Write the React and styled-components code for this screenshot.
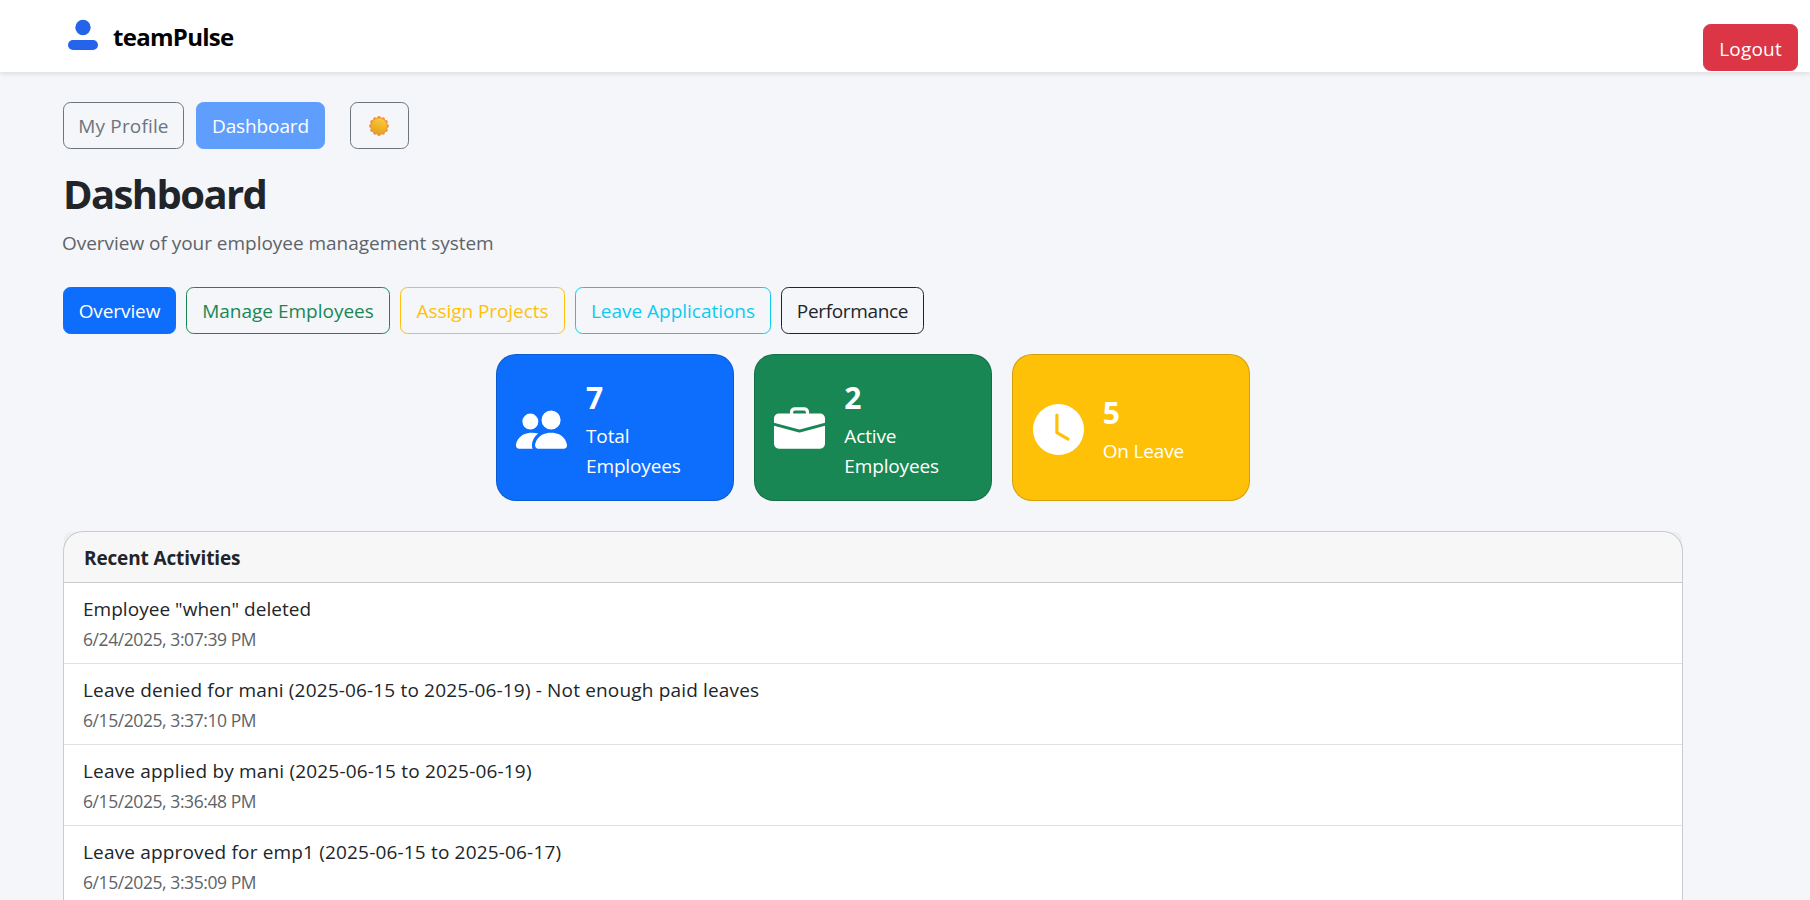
import React from "react";
import styled, { createGlobalStyle } from "styled-components";
import { BsPeopleFill, BsBriefcaseFill, BsClockFill } from "react-icons/bs";

const GlobalStyle = createGlobalStyle`
  *, *::before, *::after { box-sizing: border-box; }
  body {
    margin: 0;
    background: #f4f6fa;
    color: #212529;
    font-family: "Segoe UI", "Open Sans", "Noto Sans", sans-serif;
    font-size: 19px;
    line-height: 30px;
  }
`;

const Page = styled.div`
  height: 100vh;
  overflow: hidden;
`;

const Header = styled.header`
  display: flex;
  align-items: flex-start;
  justify-content: space-between;
  height: 72px;
  padding: 0 12px 0 68px;
  background: #fff;
  box-shadow: 0 2px 5px rgba(0, 0, 0, 0.1);
`;

const Brand = styled.div`
  display: flex;
  align-items: flex-start;
  gap: 15px;
  padding-top: 19px;
`;

const BrandName = styled.span`
  padding-top: 2px;
  color: #000;
  font-size: 24px;
  font-weight: 700;
  letter-spacing: -0.72px;
  line-height: 31px;
`;

const Button = styled.button`
  display: inline-flex;
  align-items: center;
  justify-content: center;
  flex: none;
  width: ${(p) => p.$width}px;
  height: 47px;
  margin: 0;
  padding: 0;
  border: 1px solid ${(p) => p.$color};
  border-radius: 7.5px;
  background: ${(p) => (p.$solid ? p.$color : "transparent")};
  color: ${(p) => (p.$solid ? "#fff" : p.$color)};
  font: inherit;
  letter-spacing: ${(p) => p.$spacing || 0}px;
  white-space: nowrap;
`;

const LogoutButton = styled(Button)`
  margin-top: 24px;
  padding-top: 2px;
`;

const ThemeButton = styled(Button)`
  margin-left: 13px;
  padding-right: 1px;
`;

const Content = styled.main`
  width: 1620px;
  margin-left: 63px;
  padding-top: 30px;
`;

const NavRow = styled.nav`
  display: flex;
  gap: 12px;
`;

const Title = styled.h1`
  margin: 21px 0 10px;
  font-size: 40px;
  font-weight: 700;
  letter-spacing: -1.6px;
  line-height: 48px;
`;

const Subtitle = styled.p`
  margin: 0 0 29px;
  color: #5e6368;
  letter-spacing: -0.03px;
  text-indent: -1px;
`;

const Tabs = styled.div`
  display: flex;
  gap: 10px;
`;

const Stats = styled.section`
  display: flex;
  justify-content: center;
  gap: 20px;
  margin: 20px 0 30px;
`;

const StatCard = styled.article`
  display: flex;
  align-items: center;
  gap: 19px;
  width: 238.3px;
  height: 147px;
  padding: 5px 19.5px 0;
  border: 1px solid rgba(0, 0, 0, 0.175);
  border-radius: 20px;
  background: ${(p) => p.$color};
  color: #fff;

  svg {
    flex: none;
    width: 51px;
    height: 51px;
    margin-bottom: 2px;
  }
`;

const StatValue = styled.h3`
  margin: 0 0 5px;
  font-size: 30px;
  font-weight: 700;
  line-height: 36px;
`;

const StatLabel = styled.div`
  letter-spacing: -0.15px;
`;

const Panel = styled.section`
  border: 1px solid #c9cbcf;
  border-radius: 20px;
  background: #fff;
`;

const PanelHeader = styled.div`
  height: 51px;
  padding: 11px 20px 0;
  border-bottom: 1px solid #c9cbcf;
  border-radius: 7px 7px 0 0;
  background: rgba(0, 0, 0, 0.03);
  font-weight: 700;
  letter-spacing: -0.14px;
`;

const Activity = styled.div`
  height: 81px;
  padding: 11px 19px 0;
  border-bottom: 1px solid #dee2e6;
  letter-spacing: ${(p) => p.$spacing}px;
`;

const ActivityDate = styled.div`
  color: #5e6368;
  font-size: 17.5px;
  letter-spacing: -0.42px;
  line-height: 31px;
`;

function Logo() {
  return (
    <svg width="30" height="32" viewBox="0 0 30 32" fill="#2563eb">
      <circle cx="15" cy="8.5" r="7.7" />
      <rect y="21" width="30" height="10" rx="5" />
    </svg>
  );
}

const rays = Array.from({ length: 12 }, (_, i) => {
  const angle = (i * Math.PI) / 6;
  return [10 + 7.9 * Math.sin(angle), 10 - 7.9 * Math.cos(angle)];
});

function Sun() {
  return (
    <svg width="20" height="20" viewBox="0 0 20 20">
      <defs>
        <linearGradient id="sunFace" x1="0.7" y1="0" x2="0.3" y2="1">
          <stop offset="0" stopColor="#fbcb3b" />
          <stop offset="1" stopColor="#e2a21f" />
        </linearGradient>
      </defs>
      <circle cx="10" cy="10" r="8.6" fill="#f3943a" />
      {rays.map(([x, y], i) => (
        <circle key={i} cx={x} cy={y} r="2" fill="#f3913a" />
      ))}
      <circle cx="10" cy="10" r="7.8" fill="url(#sunFace)" />
    </svg>
  );
}

const tabs = [
  { label: "Overview", color: "#0d6efd", width: 113, solid: true, spacing: -0.09 },
  { label: "Manage Employees", color: "#198754", width: 204 },
  { label: "Assign Projects", color: "#ffc107", width: 165, spacing: -0.06 },
  { label: "Leave Applications", color: "#0dcaf0", width: 196, spacing: -0.02 },
  { label: "Performance", color: "#212529", width: 143, spacing: -0.33 },
];

const stats = [
  { value: 7, label: "Total Employees", color: "#0d6efd", Icon: BsPeopleFill },
  { value: 2, label: "Active Employees", color: "#198754", Icon: BsBriefcaseFill },
  { value: 5, label: "On Leave", color: "#ffc107", Icon: BsClockFill },
];

const activities = [
  { text: 'Employee "when" deleted', date: "6/24/2025, 3:07:39 PM", spacing: 0.03 },
  {
    text: "Leave denied for mani (2025-06-15 to 2025-06-19) - Not enough paid leaves",
    date: "6/15/2025, 3:37:10 PM",
    spacing: 0.163,
  },
  { text: "Leave applied by mani (2025-06-15 to 2025-06-19)", date: "6/15/2025, 3:36:48 PM", spacing: 0.18 },
  { text: "Leave approved for emp1 (2025-06-15 to 2025-06-17)", date: "6/15/2025, 3:35:09 PM", spacing: 0.17 },
];

const ActivityList = styled.div`
  padding-bottom: 40px;
`;

export default function App() {
  return (
    <Page>
      <GlobalStyle />
      <Header>
        <Brand>
          <Logo />
          <BrandName>teamPulse</BrandName>
        </Brand>
        <LogoutButton $solid $color="#dc3545" $width={95} $spacing={0.2}>
          Logout
        </LogoutButton>
      </Header>
      <Content>
        <NavRow>
          <Button $color="#6c757d" $width={121} $spacing={0.15}>
            My Profile
          </Button>
          <Button $solid $color="#609efe" $width={129} $spacing={-0.11}>
            Dashboard
          </Button>
          <ThemeButton $color="#6c757d" $width={59} aria-label="Toggle theme">
            <Sun />
          </ThemeButton>
        </NavRow>
        <Title>Dashboard</Title>
        <Subtitle>Overview of your employee management system</Subtitle>
        <Tabs>
          {tabs.map((t) => (
            <Button key={t.label} $color={t.color} $width={t.width} $solid={t.solid} $spacing={t.spacing}>
              {t.label}
            </Button>
          ))}
        </Tabs>
        <Stats>
          {stats.map(({ value, label, color, Icon }) => (
            <StatCard key={label} $color={color}>
              <Icon />
              <div>
                <StatValue>{value}</StatValue>
                <StatLabel>{label}</StatLabel>
              </div>
            </StatCard>
          ))}
        </Stats>
        <Panel>
          <PanelHeader>Recent Activities</PanelHeader>
          <ActivityList>
            {activities.map((a) => (
              <Activity key={a.date} $spacing={a.spacing}>
                {a.text}
                <ActivityDate>{a.date}</ActivityDate>
              </Activity>
            ))}
          </ActivityList>
        </Panel>
      </Content>
    </Page>
  );
}
